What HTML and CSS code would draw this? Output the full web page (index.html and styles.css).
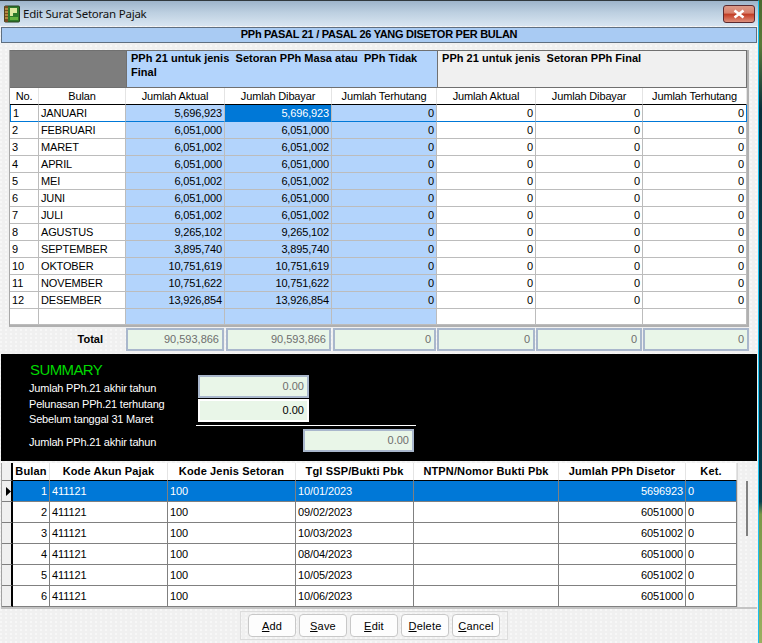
FILE: index.html
```html
<!DOCTYPE html>
<html lang="id">
<head>
<meta charset="utf-8">
<title>Edit Surat Setoran Pajak</title>
<link rel="stylesheet" href="styles.css">
</head>
<body>
<div class="screen">
<main class="window">
  <header class="titlebar">
    <svg class="app-icon" width="16" height="18" viewBox="0 0 16 18"><rect x="0.5" y="1" width="15" height="16" rx="1" fill="#2f7a2a" stroke="#26401f"/><rect x="0.5" y="1" width="3.5" height="16" fill="#7a4a20"/><path d="M1 4h3M1 7h3M1 10h3M1 13h3" stroke="#e8c860" stroke-width="1"/><path d="M6 3h7v5H9v3H6z" fill="#dfe8a0"/><path d="M6 12h8v3H6z" fill="#66b13f"/></svg>
    <span class="title-text">Edit Surat Setoran Pajak</span>
    <button class="close" aria-label="Close"><svg width="14" height="10" viewBox="0 0 14 10"><path d="M2.500 1.500 11.500 8.500M11.500 1.500 2.500 8.500" stroke="#fff" stroke-width="2.600"/></svg></button>
  </header>
  <h1 class="banner">PPh PASAL 21 / PASAL 26 YANG DISETOR PER BULAN</h1>
  <section class="upper">
    <table class="ledger">
      <colgroup><col class="c1"><col class="c2"><col class="c3"><col class="c4"><col class="c5"><col class="c6"><col class="c7"><col class="c8"></colgroup>
      <thead>
        <tr class="band"><th colspan="2" class="band-gray"></th><th colspan="3" class="band-blue">PPh 21 untuk jenis  Setoran PPh Masa atau  PPh Tidak Final</th><th colspan="3" class="band-plain">PPh 21 untuk jenis  Setoran PPh Final</th></tr>
        <tr class="heads"><th>No.</th><th>Bulan</th><th>Jumlah Aktual</th><th>Jumlah Dibayar</th><th>Jumlah Terhutang</th><th>Jumlah Aktual</th><th>Jumlah Dibayar</th><th>Jumlah Terhutang</th></tr>
      </thead>
      <tbody>
        <tr class="current"><td>1</td><td>JANUARI</td><td class="n b">5,696,923</td><td class="n picked">5,696,923</td><td class="n b">0</td><td class="n">0</td><td class="n">0</td><td class="n">0</td></tr>
        <tr><td>2</td><td>FEBRUARI</td><td class="n b">6,051,000</td><td class="n b">6,051,000</td><td class="n b">0</td><td class="n">0</td><td class="n">0</td><td class="n">0</td></tr>
        <tr><td>3</td><td>MARET</td><td class="n b">6,051,002</td><td class="n b">6,051,002</td><td class="n b">0</td><td class="n">0</td><td class="n">0</td><td class="n">0</td></tr>
        <tr><td>4</td><td>APRIL</td><td class="n b">6,051,000</td><td class="n b">6,051,000</td><td class="n b">0</td><td class="n">0</td><td class="n">0</td><td class="n">0</td></tr>
        <tr><td>5</td><td>MEI</td><td class="n b">6,051,002</td><td class="n b">6,051,002</td><td class="n b">0</td><td class="n">0</td><td class="n">0</td><td class="n">0</td></tr>
        <tr><td>6</td><td>JUNI</td><td class="n b">6,051,000</td><td class="n b">6,051,000</td><td class="n b">0</td><td class="n">0</td><td class="n">0</td><td class="n">0</td></tr>
        <tr><td>7</td><td>JULI</td><td class="n b">6,051,002</td><td class="n b">6,051,002</td><td class="n b">0</td><td class="n">0</td><td class="n">0</td><td class="n">0</td></tr>
        <tr><td>8</td><td>AGUSTUS</td><td class="n b">9,265,102</td><td class="n b">9,265,102</td><td class="n b">0</td><td class="n">0</td><td class="n">0</td><td class="n">0</td></tr>
        <tr><td>9</td><td>SEPTEMBER</td><td class="n b">3,895,740</td><td class="n b">3,895,740</td><td class="n b">0</td><td class="n">0</td><td class="n">0</td><td class="n">0</td></tr>
        <tr><td>10</td><td>OKTOBER</td><td class="n b">10,751,619</td><td class="n b">10,751,619</td><td class="n b">0</td><td class="n">0</td><td class="n">0</td><td class="n">0</td></tr>
        <tr><td>11</td><td>NOVEMBER</td><td class="n b">10,751,622</td><td class="n b">10,751,622</td><td class="n b">0</td><td class="n">0</td><td class="n">0</td><td class="n">0</td></tr>
        <tr><td>12</td><td>DESEMBER</td><td class="n b">13,926,854</td><td class="n b">13,926,854</td><td class="n b">0</td><td class="n">0</td><td class="n">0</td><td class="n">0</td></tr>
        <tr class="blank"><td></td><td></td><td class="b"></td><td class="b"></td><td class="b"></td><td></td><td></td><td></td></tr>
      </tbody>
    </table>
    <div class="totals">
      <span class="total-label">Total</span>
      <output class="field t1">90,593,866</output>
      <output class="field t2">90,593,866</output>
      <output class="field t3">0</output>
      <output class="field t4">0</output>
      <output class="field t5">0</output>
      <output class="field t6">0</output>
    </div>
  </section>
  <section class="summary">
    <div class="sum-labels">
      <h2 class="sum-title">SUMMARY</h2>
      <p>Jumlah PPh.21 akhir tahun</p>
      <p>Pelunasan PPh.21 terhutang</p>
      <p>Sebelum tanggal 31 Maret</p>
      <p class="last-label">Jumlah PPh.21 akhir tahun</p>
    </div>
    <div class="sum-fields">
      <output class="field sf">0.00</output>
      <output class="field sf editable">0.00</output>
      <hr class="sum-rule">
      <output class="field sf result">0.00</output>
    </div>
  </section>
  <section class="lower">
    <table class="payments">
      <colgroup><col class="p0"><col class="p1"><col class="p2"><col class="p3"><col class="p4"><col class="p5"><col class="p6"><col class="p7"></colgroup>
      <thead><tr><th class="ind"></th><th>Bulan</th><th>Kode Akun Pajak</th><th>Kode Jenis Setoran</th><th>Tgl SSP/Bukti Pbk</th><th>NTPN/Nomor Bukti Pbk</th><th>Jumlah PPh Disetor</th><th>Ket.</th></tr></thead>
      <tbody>
        <tr class="sel"><td class="ind"><svg width="5" height="9" viewBox="0 0 5 9"><path d="M0 0 5 4.500 0 9z" fill="#000"/></svg></td><td class="n">1</td><td>411121</td><td>100</td><td>10/01/2023</td><td></td><td class="n">5696923</td><td>0</td></tr>
        <tr><td class="ind"></td><td class="n">2</td><td>411121</td><td>100</td><td>09/02/2023</td><td></td><td class="n">6051000</td><td>0</td></tr>
        <tr><td class="ind"></td><td class="n">3</td><td>411121</td><td>100</td><td>10/03/2023</td><td></td><td class="n">6051002</td><td>0</td></tr>
        <tr><td class="ind"></td><td class="n">4</td><td>411121</td><td>100</td><td>08/04/2023</td><td></td><td class="n">6051000</td><td>0</td></tr>
        <tr><td class="ind"></td><td class="n">5</td><td>411121</td><td>100</td><td>10/05/2023</td><td></td><td class="n">6051002</td><td>0</td></tr>
        <tr><td class="ind"></td><td class="n">6</td><td>411121</td><td>100</td><td>10/06/2023</td><td></td><td class="n">6051000</td><td>0</td></tr>
      </tbody>
    </table>
    <div class="scroll"><div class="thumb"></div></div>
  </section>
  <footer class="actions">
    <div class="btn-group">
      <button class="btn"><u>A</u>dd</button>
      <button class="btn"><u>S</u>ave</button>
      <button class="btn"><u>E</u>dit</button>
      <button class="btn"><u>D</u>elete</button>
      <button class="btn"><u>C</u>ancel</button>
    </div>
  </footer>
</main>
<aside class="desktop"></aside>
</div>
</body>
</html>
```

FILE: styles.css
```css
* { box-sizing: border-box; }
html, body { margin: 0; padding: 0; }
body {
  width: 762px;
  height: 643px;
  overflow: hidden;
  font-family: "Liberation Sans", Arial, sans-serif;
  font-size: 11px;
  color: #000;
  background: #06303c;
}
.screen { display: flex; width: 762px; height: 643px; }
.window {
  width: 759px;
  height: 643px;
  flex: none;
  border-top: 1px solid #30383c;
  border-right: 1px solid #18c0f0;
  background-color: #f0f0f0;
  background-image: radial-gradient(circle at 1px 1px, #f7f7f7 0.7px, transparent 1px);
  background-size: 5px 4px;
  display: flex;
  flex-direction: column;
}
.desktop {
  flex: 1;
  background: linear-gradient(to bottom, #4a6a30 0, #5a7a38 7%, #06303c 17%, #0a3a48 40%, #06303c 55%, #08404f 78%, #7a9848 80%, #9ab060 100%);
}
.titlebar {
  height: 25px;
  flex: none;
  display: flex;
  align-items: center;
  padding: 0 3px 0 4px;
  background: linear-gradient(to bottom, #9db4ca 0, #bccfe0 45%, #d8e5f1 100%);
}
.app-icon { flex: none; }
.title-text {
  margin-left: 3px;
  font-family: "Noto Sans", sans-serif;
  font-size: 11.5px;
  letter-spacing: -0.23px;
  color: #111;
  flex: 1;
}
.close {
  width: 32px;
  height: 18px;
  padding: 0;
  display: flex;
  align-items: center;
  justify-content: center;
  border: 1px solid #5a2a30;
  border-radius: 3px;
  background: linear-gradient(to bottom, #dc9a88 0, #d87f6c 45%, #bf3a22 50%, #cf5a44 70%, #dc8f7c 100%);
}
.banner {
  height: 16px;
  flex: none;
  margin: 1px 1px 0;
  border: 1px solid #5f6f80;
  background-color: #a9cbf3;
  font-size: 11px;
  font-weight: bold;
  line-height: 12px;
  text-align: center;
  letter-spacing: -0.28px;
}
.upper {
  flex: none;
  height: 309px;
  padding: 7px 0 0 9px;
}
.ledger {
  table-layout: fixed;
  width: 739px;
  border-collapse: separate;
  border-spacing: 0;
  border-left: 1px solid #a8a8a8;
  border-right: 2px solid #b0b0b0;
  border-bottom: 2px solid #b0b0b0;
  background: #fff;
  letter-spacing: -0.15px;
}
.c1 { width: 29px; }
.c2 { width: 87px; }
.c3 { width: 99px; }
.c4 { width: 107px; }
.c5 { width: 105px; }
.c6 { width: 99px; }
.c7 { width: 107px; }
.c8 { width: 104px; }
.band th {
  height: 38px;
  padding: 0;
  vertical-align: top;
  text-align: left;
  font-size: 11px;
  line-height: 14px;
  white-space: pre-wrap;
  letter-spacing: 0.03px;
  border-top: 1px solid #707070;
  border-bottom: 1px solid #707070;
}
.band-gray { background-color: #7d7d7d; }
.ledger .band-blue {
  background-color: #b3d4fc;
  padding: 0 10px 0 4px;
  border-left: 1px solid #707070;
}
.ledger .band-plain {
  background-color: #f0f0f0;
  padding: 0 4px 0 4px;
  border-left: 1px solid #707070;
  border-right: 1px solid #707070;
}
.heads th {
  height: 17px;
  padding: 0;
  font-weight: normal;
  text-align: center;
  line-height: 16px;
  border-right: 1px solid #e4e4e4;
  border-bottom: 1px solid #000;
  background: #fff;
  white-space: nowrap;
}
.ledger td {
  height: 17px;
  padding: 0 2px 0 2px;
  line-height: 16px;
  border-right: 1px solid #bcbcbc;
  border-bottom: 1px solid #bcbcbc;
  white-space: nowrap;
  overflow: hidden;
}
.ledger td.n { text-align: right; padding-right: 2px; }
.ledger td.b { background-color: #b3d4fc; }
.ledger .current td { border-bottom-color: #0078d7; }
.ledger .current td:first-child { border-left: 1px solid #0078d7; }
.ledger .current td:last-child { border-right: 1px solid #0078d7; }
.ledger td.picked { background: #0078d7; color: #fff; }
.ledger .blank td { height: 16px; }
.totals {
  display: flex;
  margin-top: 1px;
  height: 23px;
}
.total-label {
  width: 117px;
  flex: none;
  padding-right: 23px;
  font-weight: bold;
  text-align: right;
  line-height: 22px;
}
.field {
  display: block;
  flex: none;
  border: 2px solid #a9b7cc;
  background: #e9f6e8;
  color: #6e6e6e;
  text-align: right;
  padding: 0 3px;
  line-height: 19px;
}
.t1 { width: 98px; }
.t2 { width: 105px; margin-left: 2px; }
.t3 { width: 103px; margin-left: 2px; }
.t4 { width: 98px; margin-left: 1px; }
.t5 { width: 106px; margin-left: 1px; }
.t6 { width: 106px; margin-left: 1px; }
.summary {
  height: 107px;
  flex: none;
  margin: 2px 1px 0;
  padding-left: 28px;
  background: #000;
  display: flex;
}
.sum-labels { width: 169px; color: #fff; padding-top: 7px; flex: none; }
.sum-labels p { margin: 0; line-height: 15.5px; height: 15.5px; white-space: nowrap; letter-spacing: -0.2px; }
.sum-title { margin: 0 0 2px 1px; font-size: 15px; line-height: 18px; letter-spacing: -0.6px; font-weight: normal; color: #00d800; }
.sum-labels .last-label { margin-top: 7px; }
.sum-fields { padding-top: 21px; width: 220px; display: flex; flex-direction: column; }
.sf { width: 111px; height: 23px; }
.sf + .sf { margin-top: 1px; }
.sf.editable { border-color: #fff; color: #000; }
.sum-rule { width: 220px; height: 1px; margin: 3px 0 3px -2px; border: 0; background: #fff; flex: none; }
.sf.result { margin-left: 105px; margin-top: 0; }
.lower {
  height: 146px;
  flex: none;
  margin: 2px 1px 0 1px;
  display: flex;
  border-bottom: 2px solid #c4c4c4;
}
.payments {
  table-layout: fixed;
  width: 736px;
  flex: none;
  height: 144px;
  border-collapse: separate;
  border-spacing: 0;
  background: #fff;
  border-left: 1px solid #a0a0a0;
}
.p0 { width: 11px; }
.p1 { width: 37px; }
.p2 { width: 118px; }
.p3 { width: 128px; }
.p4 { width: 118px; }
.p5 { width: 145px; }
.p6 { width: 127px; }
.p7 { width: 51px; }
.payments th {
  height: 18px;
  padding: 0;
  font-weight: bold;
  text-align: center;
  line-height: 17px;
  letter-spacing: 0.15px;
  border-right: 1px solid #e4e4e4;
  border-bottom: 1px solid #000;
  white-space: nowrap;
}
.payments td {
  height: 21px;
  padding: 0 0 0 2px;
  line-height: 20px;
  border-right: 1px solid #808080;
  border-bottom: 1px solid #808080;
  letter-spacing: -0.1px;
  white-space: nowrap;
}
.payments td.n { text-align: right; padding: 0 2px 0 0; }
.payments .ind {
  padding: 0;
  background: #f0f0f0;
  border-right: 2px solid #000;
  vertical-align: middle;
  text-align: right;
  line-height: 0;
}
.payments th.ind { border-bottom-color: #808080; background: #f0f0f0; }
.payments .sel td { background: #0078d7; color: #fff; }
.payments .sel td.ind { background: #f0f0f0; }
.scroll { flex: 1; position: relative; border-left: 1px solid #d8d8d8; }
.thumb { position: absolute; left: 8px; top: 18px; width: 2px; height: 55px; background: #808080; }
.actions {
  flex: 1;
  display: flex;
  align-items: flex-start;
  padding: 2px 0 0 240px;
}
.btn-group {
  display: flex;
  gap: 3px;
  width: 268px;
  height: 29px;
  padding: 2px 7px;
  border: 1px solid #dcdcdc;
}
.btn {
  width: 48px;
  height: 23px;
  padding: 0;
  border: 1px solid #c8c8c8;
  border-radius: 4px;
  background: #fdfdfd;
  font-family: "Liberation Sans", Arial, sans-serif;
  font-size: 11px;
  letter-spacing: 0.2px;
  color: #000;
}
```
